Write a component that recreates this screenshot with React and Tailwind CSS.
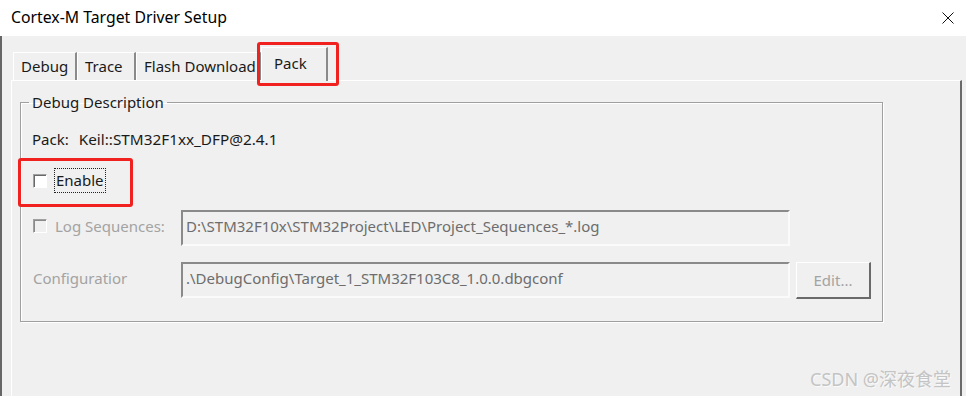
import React from 'react';

const tabs = [
  { label: 'Debug', w: 'w-[64px]' },
  { label: 'Trace', w: 'w-[59px]' },
  { label: 'Flash Download', w: 'w-[125px]' },
];

const App = () => {
  return (
    <div className="relative w-[966px] h-[396px] overflow-hidden bg-[#f0f0f0] text-[15px] text-[#1a1a1a] font-['Noto_Sans','Noto_Sans_CJK_SC',sans-serif]">
      {/* title bar */}
      <div className="flex items-center justify-between h-[36px] bg-white pl-[11px] pr-[11px]">
        <span className="text-black text-[15.8px] leading-none">Cortex-M Target Driver Setup</span>
        <svg width="12" height="12" viewBox="0 0 12 12" className="mr-[1px]">
          <path d="M0.5 0.5L11.5 11.5M11.5 0.5L0.5 11.5" stroke="#111" strokeWidth="1" fill="none" />
        </svg>
      </div>

      <div className="flex h-[360px] border-l-2 border-[#666]">
        <div className="ml-[9px] w-[951px] flex flex-col">
          {/* tabs */}
          <div className="flex items-end h-[44px] pl-[2px]">
            {tabs.map((t) => (
              <div
                key={t.label}
                className={`${t.w} h-[28px] flex items-center pl-[7px] border-l border-t border-l-white border-t-white border-r-2 border-r-[#8a8a8a] bg-[#f0f0f0] leading-none`}
              >
                {t.label}
              </div>
            ))}
            <div className="relative z-10 w-[67px] h-[34px] -mb-[1px] flex items-start pt-[8px] pl-[12px] border-l border-t border-l-white border-t-white border-r-2 border-r-[#8a8a8a] bg-[#f0f0f0] leading-none">
              Pack
            </div>
          </div>

          {/* tab panel */}
          <div className="flex-1 border-t border-l border-t-white border-l-white border-r-2 border-r-[#6a6a6a] pl-[8px] pt-[11px]">
            <fieldset className="w-[863px] border border-[#a0a0a0] shadow-[1px_1px_0_#fff,inset_1px_1px_0_#fff] pb-[22px]">
              <legend className="ml-[8px] px-[3px] h-[20px] leading-[20px]">Debug Description</legend>

              <div className="pl-[11px]">
                <div className="mt-[17px] h-[20px] flex items-center">
                  <span>Pack:</span>
                  <span className="ml-[10px] text-[15.3px]">Keil::STM32F1xx_DFP@2.4.1</span>
                </div>

                <div className="mt-[19px] h-[25px] flex items-center">
                  <span className="ml-[1px] w-[14px] h-[14px] border-t border-l border-[#a0a0a0] border-b border-r border-b-white border-r-white bg-white shadow-[inset_1px_1px_0_#696969]" />
                  <span className="ml-[7px] h-[25px] px-[1px] flex items-center border border-dotted border-[#222]">Enable</span>
                </div>

                <div className="mt-[17px] h-[36px] flex">
                  <div className="w-[149px] h-[20px] mt-[6px] flex items-center text-[#a3a3a3]">
                    <span className="ml-[1px] w-[14px] h-[14px] border-t border-l border-[#a0a0a0] border-b border-r border-b-white border-r-white bg-[#f0f0f0] shadow-[inset_1px_1px_0_#8a8a8a]" />
                    <span className="ml-[8px]">Log Sequences:</span>
                  </div>
                  <div className="w-[609px] h-[36px] border-t-2 border-l-2 border-t-[#8a8a8a] border-l-[#8a8a8a] border-b-2 border-r-2 border-b-[#fafafa] border-r-[#fafafa] pl-[3px] pt-[4px] leading-[20px] text-[#6d6d6d]">
                    D:\STM32F10x\STM32Project\LED\Project_Sequences_*.log
                  </div>
                </div>

                <div className="mt-[16px] h-[37px] flex">
                  <div className="w-[149px] h-[20px] mt-[6px] flex items-center text-[#a3a3a3]">
                    <span className="ml-[1px]">Configuratior</span>
                  </div>
                  <div className="w-[609px] h-[36px] border-t-2 border-l-2 border-t-[#8a8a8a] border-l-[#8a8a8a] border-b-2 border-r-2 border-b-[#fafafa] border-r-[#fafafa] pl-[3px] pt-[4px] leading-[20px] text-[#6d6d6d]">
                    .\DebugConfig\Target_1_STM32F103C8_1.0.0.dbgconf
                  </div>
                  <div className="ml-[6px] w-[75px] h-[37px] flex items-center justify-center border-t border-l border-t-white border-l-white border-b-2 border-r-2 border-b-[#6a6a6a] border-r-[#6a6a6a] text-[#a3a3a3]">
                    Edit...
                  </div>
                </div>
              </div>
            </fieldset>
          </div>
        </div>
      </div>

      {/* annotations */}
      <div className="absolute left-[257px] top-[42px] w-[82px] h-[44px] border-[3px] border-[#f0211f] rounded-[3px] pointer-events-none" />
      <div className="absolute left-[18px] top-[158px] w-[115px] h-[49px] border-[3px] border-[#f0211f] rounded-[3px] pointer-events-none" />

      {/* watermark */}
      <div className="absolute left-[810px] top-[366px] text-[18px] leading-[26px] text-[#c4c4c4] whitespace-nowrap [text-shadow:1px_1px_0_#fafafa]">
        CSDN @深夜食堂
      </div>
    </div>
  );
};

export default App;
